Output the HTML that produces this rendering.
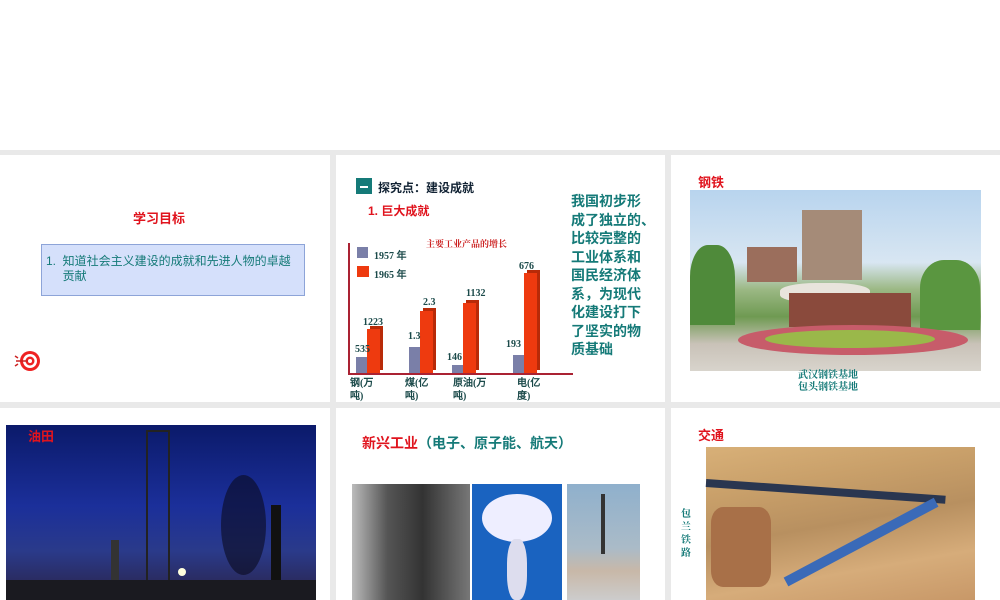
<!DOCTYPE html>
<html><head><meta charset="utf-8"><style>
*{margin:0;padding:0;box-sizing:border-box}
body{width:1000px;height:600px;overflow:hidden;background:#fff;position:relative;font-family:"Liberation Sans","Noto Sans CJK SC",sans-serif}
.a{position:absolute}
.bg{position:absolute;left:0;top:150px;width:1000px;height:450px;background:#e9e9e9}
.s{position:absolute;background:#fff;overflow:hidden}
.red{color:#e0141e;font-weight:bold}
.teal{color:#157a78;font-weight:bold}
.bar{position:absolute;bottom:0}
.b1{background:#7a7fa8;width:11px}
.b2{background:#ee3a0f;width:13px;box-shadow:3px -3px 0 #b82a08}
.n{position:absolute;font:bold 10px "Liberation Serif",serif;color:#1b4a4a;white-space:nowrap}
</style></head><body>
<div class="bg"></div>
<!-- slide 1 -->
<div class="s" style="left:0;top:155px;width:330px;height:247px">
 <div class="a red" style="left:133px;top:53px;font-size:13px">学习目标</div>
 <div class="a" style="left:41px;top:89px;width:264px;height:52px;background:#d5e0fb;border:1px solid #8da4d8"></div>
 <div class="a" style="left:46px;top:99px;width:262px;font-size:12px;line-height:15px;color:#157a78;white-space:nowrap">1.&nbsp; 知道社会主义建设的成就和先进人物的卓越<br>&nbsp;&nbsp;&nbsp;&nbsp;&nbsp;贡献</div>
 <svg class="a" style="left:14px;top:191px" width="32" height="30"><circle cx="16" cy="15" r="10" fill="#e22"/><circle cx="16" cy="15" r="7" fill="#fff"/><circle cx="16" cy="15" r="4.5" fill="#e22"/><circle cx="16" cy="15" r="2" fill="#fff"/><path d="M2 15h12M4 12l-3 -2M4 18l-3 2" stroke="#c22" stroke-width="1.5"/></svg>
</div>
<!-- slide 2 -->
<div class="s" style="left:336px;top:155px;width:329px;height:247px">
 <div class="a" style="left:20px;top:23px;width:16px;height:16px;background:#157a78"></div>
 <div class="a" style="left:24px;top:31px;width:8px;height:2px;background:#fff"></div>
 <div class="a" style="left:42px;top:24px;font-size:12px;font-weight:bold;color:#123">探究点：建设成就</div>
 <div class="a red" style="left:32px;top:47px;font-size:12px">1.&nbsp;巨大成就</div>
 <div class="a" style="left:90px;top:82px;font:bold 9px 'Noto Serif CJK SC',serif;color:#c22">主要工业产品的增长</div>
 <div class="a" style="left:12px;top:88px;width:2px;height:132px;background:#a23"></div>
 <div class="a" style="left:12px;top:218px;width:225px;height:2px;background:#a23"></div>
 <div class="a b1" style="left:21px;top:92px;height:11px"></div><div class="n" style="left:38px;top:92px">1957 年</div>
 <div class="a" style="left:21px;top:111px;width:12px;height:11px;background:#ee3a0f"></div><div class="n" style="left:38px;top:111px">1965 年</div>
 <div class="a" style="left:20px;top:91px;width:220px;height:127px">
  <div class="bar b1" style="left:0;height:16px"></div><div class="bar b2" style="left:11px;height:44px"></div>
  <div class="n" style="left:-1px;top:98px">535</div><div class="n" style="left:7px;top:71px">1223</div>
  <div class="bar b1" style="left:53px;height:26px"></div><div class="bar b2" style="left:64px;height:62px"></div>
  <div class="n" style="left:52px;top:85px">1.3</div><div class="n" style="left:67px;top:51px">2.3</div>
  <div class="bar b1" style="left:96px;height:8px"></div><div class="bar b2" style="left:107px;height:70px"></div>
  <div class="n" style="left:91px;top:106px">146</div><div class="n" style="left:110px;top:42px">1132</div>
  <div class="bar b1" style="left:157px;height:18px"></div><div class="bar b2" style="left:168px;height:100px"></div>
  <div class="n" style="left:150px;top:93px">193</div><div class="n" style="left:163px;top:15px">676</div>
 </div>
 <div class="n" style="left:14px;top:222px;line-height:13px">钢(万<br>吨)</div>
 <div class="n" style="left:69px;top:222px;line-height:13px">煤(亿<br>吨)</div>
 <div class="n" style="left:117px;top:222px;line-height:13px">原油(万<br>吨)</div>
 <div class="n" style="left:181px;top:222px;line-height:13px">电(亿<br>度)</div>
 <div class="a teal" style="left:235px;top:37px;font-size:14px;line-height:18.5px;white-space:nowrap">我国初步形<br>成了独立的、<br>比较完整的<br>工业体系和<br>国民经济体<br>系，为现代<br>化建设打下<br>了坚实的物<br>质基础</div>
</div>
<!-- slide 3 -->
<div class="s" style="left:671px;top:155px;width:329px;height:247px">
 <div class="a red" style="left:27px;top:17px;font-size:13px">钢铁</div>
 <div class="a" style="left:19px;top:35px;width:291px;height:181px;background:linear-gradient(180deg,#b8d4ee 0%,#d8e6f2 40%,#9bb884 55%,#6f9a52 70%,#c9c2b8 85%,#d8d4cc 100%)">
  <div class="a" style="left:112px;top:20px;width:60px;height:70px;background:#a58b78"></div>
  <div class="a" style="left:57px;top:57px;width:50px;height:35px;background:#9b6e5c"></div>
  <div class="a" style="left:0;top:55px;width:45px;height:80px;background:#4f8a3a;border-radius:40% 40% 0 0"></div>
  <div class="a" style="left:230px;top:70px;width:60px;height:70px;background:#5a9640;border-radius:40% 40% 0 0"></div>
  <div class="a" style="left:90px;top:93px;width:90px;height:20px;background:#e8e4dc;border-radius:40%"></div>
  <div class="a" style="left:99px;top:103px;width:122px;height:34px;background:#8a4a3c"></div>
  <div class="a" style="left:48px;top:135px;width:230px;height:30px;background:#c75c6a;border-radius:50%"></div>
  <div class="a" style="left:75px;top:140px;width:170px;height:18px;background:#9ab84a;border-radius:50%"></div>
 </div>
 <div class="a" style="left:127px;top:213px;font:bold 10px 'Noto Serif CJK SC',serif;color:#157a78;line-height:12px">武汉钢铁基地<br>包头钢铁基地</div>
</div>
<!-- slide 4 -->
<div class="s" style="left:0;top:408px;width:330px;height:192px">
 <div class="a" style="left:6px;top:17px;width:310px;height:180px;background:linear-gradient(180deg,#0b1a6a 0%,#1b2f9a 45%,#2a3a8a 70%,#2a2040 100%)">
  <div class="a" style="left:140px;top:5px;width:24px;height:150px;border:2px solid #222;border-bottom:none"></div>
  <div class="a" style="left:105px;top:115px;width:8px;height:60px;background:#333"></div>
  <div class="a" style="left:265px;top:80px;width:10px;height:100px;background:#111"></div>
  <div class="a" style="left:215px;top:50px;width:45px;height:100px;border-radius:50%;background:rgba(10,10,30,.6)"></div>
  <div class="a" style="left:0;top:155px;width:310px;height:30px;background:#1a1a20"></div>
  <div class="a" style="left:172px;top:143px;width:8px;height:8px;border-radius:50%;background:#ffd"></div>
 </div>
 <div class="a red" style="left:28px;top:18px;font-size:13px">油田</div>
</div>
<!-- slide 5 -->
<div class="s" style="left:336px;top:408px;width:329px;height:192px">
 <div class="a" style="left:26px;top:25px;font-size:14px;font-weight:bold"><span style="color:#e0141e">新兴工业</span><span style="color:#157a78">（电子、原子能、航天）</span></div>
 <div class="a" style="left:16px;top:76px;width:118px;height:116px;background:linear-gradient(90deg,#bbb,#555 30%,#333 60%,#777)"></div>
 <div class="a" style="left:136px;top:76px;width:90px;height:116px;background:#1a63c0">
  <div class="a" style="left:10px;top:10px;width:70px;height:48px;border-radius:50%;background:#eef"></div>
  <div class="a" style="left:35px;top:55px;width:20px;height:61px;background:#dde;border-radius:40%"></div>
 </div>
 <div class="a" style="left:231px;top:76px;width:73px;height:116px;background:linear-gradient(180deg,#8fb0cc 0%,#aabbc8 55%,#c8b8a8 75%,#ccc 100%)">
  <div class="a" style="left:34px;top:10px;width:4px;height:60px;background:#333"></div>
 </div>
</div>
<!-- slide 6 -->
<div class="s" style="left:671px;top:408px;width:329px;height:192px">
 <div class="a red" style="left:27px;top:17px;font-size:13px">交通</div>
 <div class="a" style="left:10px;top:98px;width:12px;font:bold 10px 'Noto Serif CJK SC',serif;color:#157a78;line-height:13px">包兰铁路</div>
 <div class="a" style="left:35px;top:39px;width:269px;height:153px;background:linear-gradient(170deg,#d8b078 0%,#c9a06a 25%,#b89060 50%,#d6ac7a 75%,#c89868 100%)">
  <div class="a" style="left:0;top:32px;width:240px;height:8px;background:#2a3650;transform:rotate(4deg);transform-origin:left"></div>
  <div class="a" style="left:80px;top:130px;width:170px;height:10px;background:#3a6ab8;transform:rotate(-28deg);transform-origin:left"></div>
  <div class="a" style="left:5px;top:60px;width:60px;height:80px;background:#a87048;border-radius:20%"></div>
 </div>
</div>
</body></html>
